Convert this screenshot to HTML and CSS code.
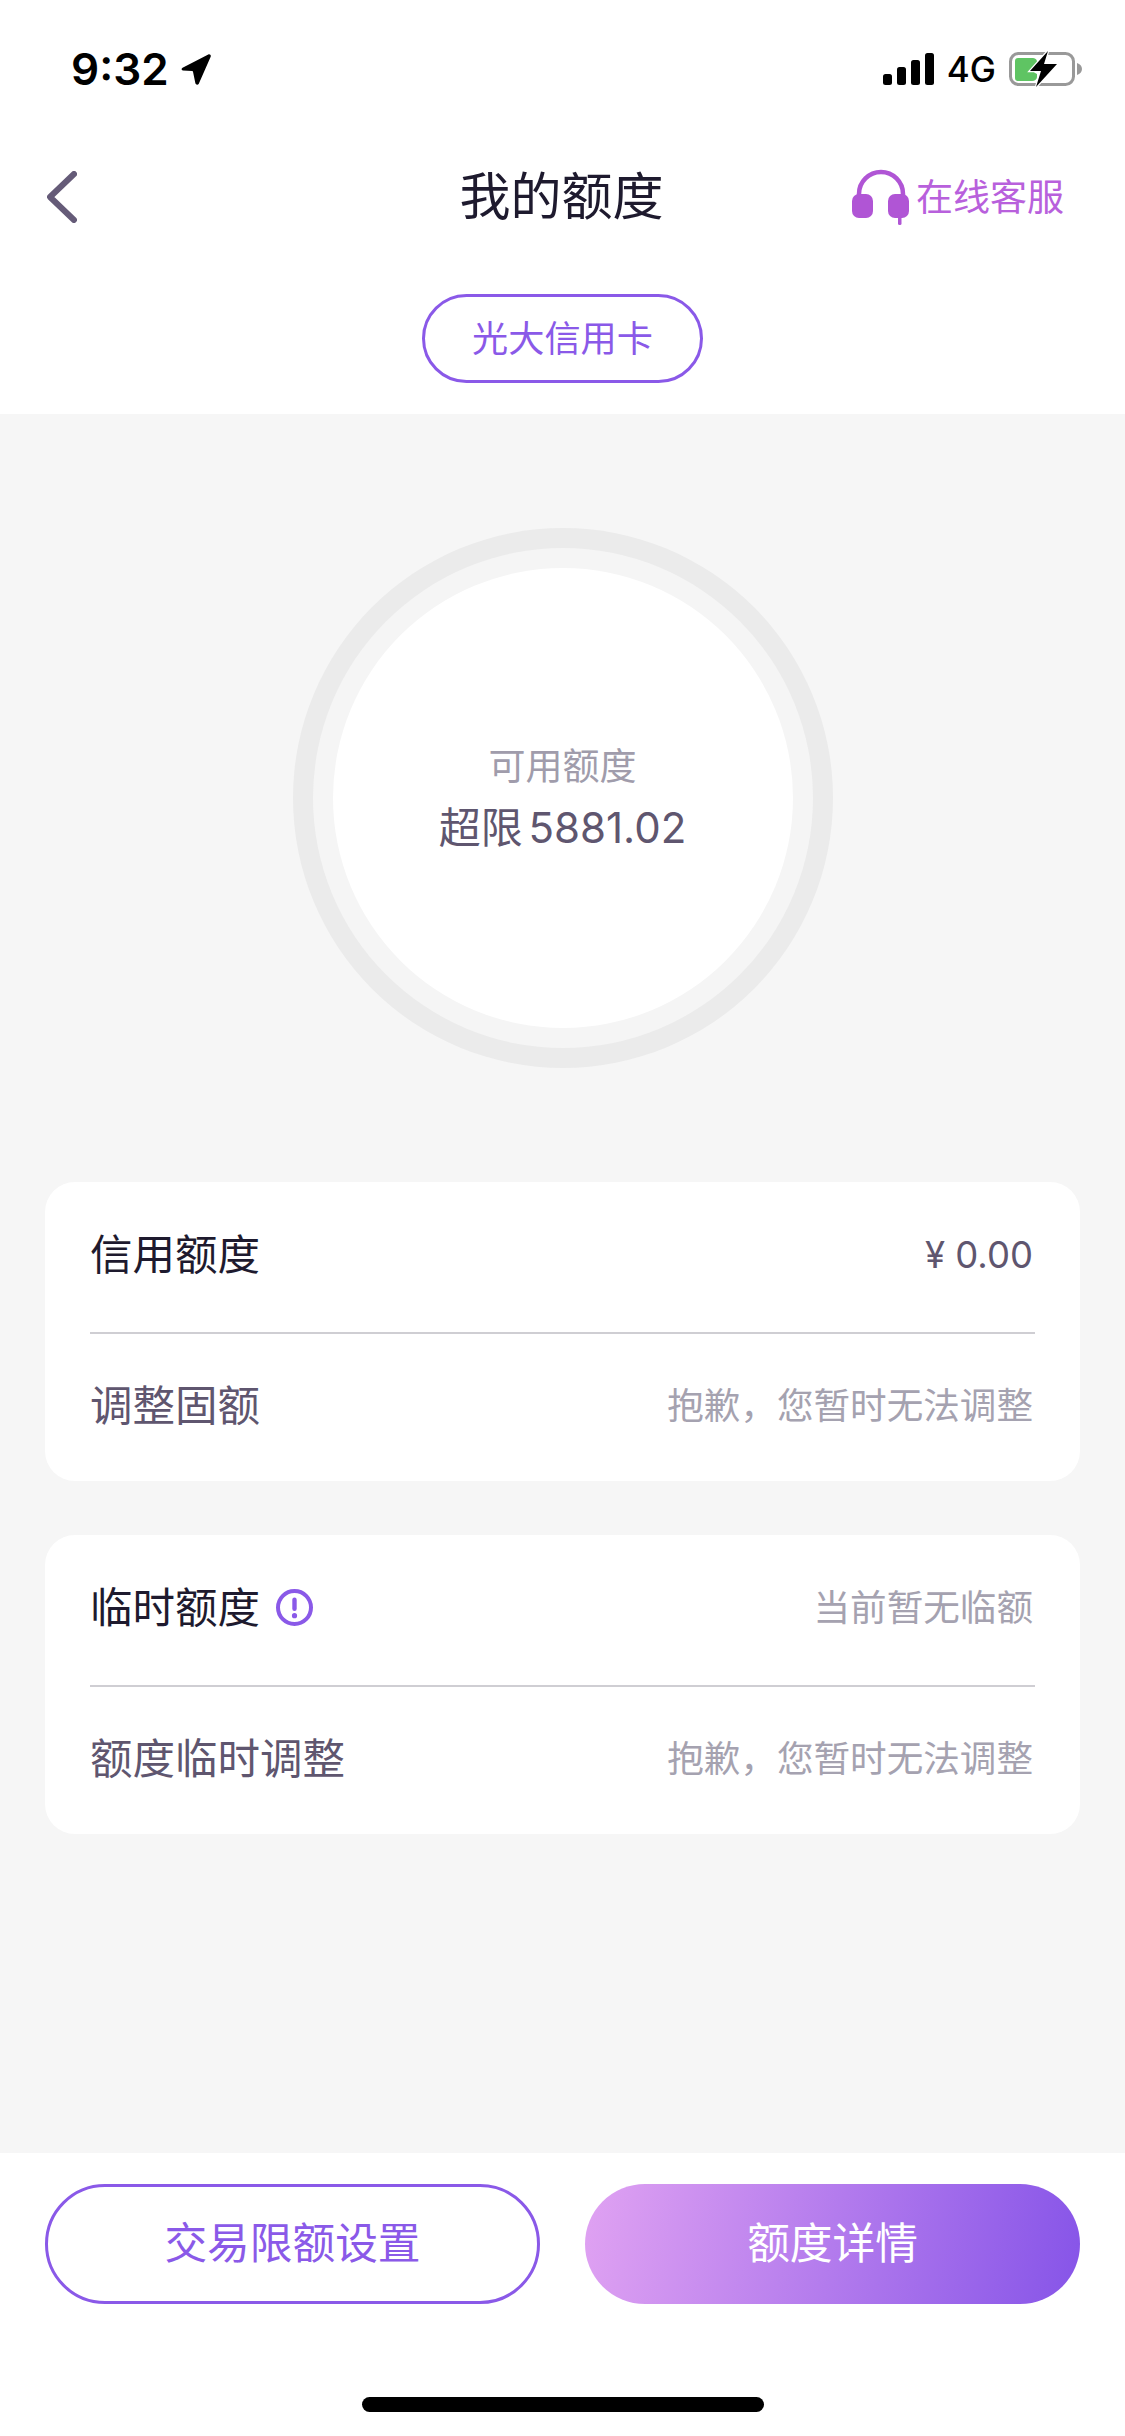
FILE: index.html
```html
<!DOCTYPE html>
<html lang="zh-CN">
<head>
  <meta charset="UTF-8" />
  <meta name="viewport" content="width=device-width, initial-scale=1">
  <title>我的额度</title>
  <link rel="stylesheet" href="styles.css">
</head>
<body>
  <div class="page">
    <div class="status-bar">
      <div class="status-left">
        <span class="time">9:32</span>
        <svg class="location" viewBox="0 0 29 30"><path d="M1.5 13.2 26.4.4c1.5-.7 2.9.7 2.3 2.2L17.2 28.7c-.7 1.6-2.9 1.4-3.3-.3l-2.3-11.2a1 1 0 0 0-.8-.8L1.9 15.9C.4 15.6 0 14 1.5 13.2Z"/></svg>
      </div>
      <div class="status-right">
        <svg class="signal" viewBox="0 0 51 32">
          <rect x="0" y="21" width="9" height="11" rx="2.5"/>
          <rect x="14" y="14" width="9" height="18" rx="2.5"/>
          <rect x="28" y="7" width="9" height="25" rx="2.5"/>
          <rect x="42" y="0" width="9" height="32" rx="2.5"/>
        </svg>
        <span class="network">4G</span>
        <svg class="battery" viewBox="0 0 73 36">
          <rect x="1.5" y="2.5" width="63" height="31" rx="8" fill="none" stroke="#999" stroke-width="3"/>
          <path d="M68 12c3 1 5 3 5 6s-2 5-5 6Z" fill="#999"/>
          <path d="M9 7h14c3 0 5 1 5 4v2c-3 1-4 3-4 5s1 4 4 5v3c0 2-2 4-5 4H9c-2 0-3-1-3-3V10c0-2 1-3 3-3Z" fill="#5fc463"/>
          <path d="M39 0 21 20h11l-5 16 21-23H35Z" fill="#000" stroke="#fff" stroke-width="2.5" paint-order="stroke"/>
        </svg>
      </div>
    </div>

    <div class="nav">
      <svg class="back" viewBox="0 0 30 52"><path d="M27 3 3 26l24 23" fill="none" stroke="#655b78" stroke-width="6" stroke-linecap="round" stroke-linejoin="round"/></svg>
      <h1 class="nav-title">我的额度</h1>
      <div class="service">
        <svg class="headset" viewBox="0 0 58 56">
          <path d="M7 27V25a22 22 0 0 1 44 0v2" fill="none" stroke="#b055d5" stroke-width="4.5"/>
          <rect x="0" y="25" width="21" height="24" rx="7" fill="#b055d5"/>
          <rect x="36" y="25" width="21" height="24" rx="7" fill="#b055d5"/>
          <rect x="46" y="46" width="3.5" height="10" rx="1.5" fill="#b055d5"/>
        </svg>
        <span>在线客服</span>
      </div>
    </div>

    <div class="tab-wrap">
      <span class="card-pill">光大信用卡</span>
    </div>

    <div class="main">
      <div class="ring-outer">
        <div class="ring-inner">
          <div class="ring-face">
            <div class="ring-label">可用额度</div>
            <div class="ring-value">超限 5881.02</div>
          </div>
        </div>
      </div>

      <div class="panel">
        <div class="row row-top">
          <span class="row-name">信用额度</span>
          <span class="row-amount">¥ 0.00</span>
        </div>
        <div class="row row-bottom">
          <span class="row-sub">调整固额</span>
          <span class="row-note">抱歉，您暂时无法调整</span>
        </div>
      </div>

      <div class="panel">
        <div class="row row-top">
          <span class="row-name with-icon">临时额度
            <svg class="info" viewBox="0 0 37 37">
              <circle cx="18.5" cy="18.5" r="16.5" fill="none" stroke="#8a59e8" stroke-width="4"/>
              <rect x="16.3" y="8.5" width="4.4" height="13.5" rx="2.2" fill="#8a59e8"/>
              <circle cx="18.5" cy="26.7" r="2.6" fill="#8a59e8"/>
            </svg>
          </span>
          <span class="row-note">当前暂无临额</span>
        </div>
        <div class="row row-bottom">
          <span class="row-sub">额度临时调整</span>
          <span class="row-note">抱歉，您暂时无法调整</span>
        </div>
      </div>
    </div>

    <div class="footer">
      <div class="actions">
        <button type="button" class="btn btn-outline"><span class="btn-text">交易限额设置</span></button>
        <button type="button" class="btn btn-fill"><span class="btn-text">额度详情</span></button>
      </div>
      <div class="home-bar"></div>
    </div>
  </div>
</body>
</html>
```

FILE: styles.css
```css
* { box-sizing: border-box; }
html, body { margin: 0; padding: 0; }
body {
  font-family: "Inter", "Noto Sans CJK SC", sans-serif;
  background: #fff;
  color: #1e1a2e;
}
.page {
  width: 1125px;
  height: 2436px;
  display: flex;
  flex-direction: column;
  overflow: hidden;
}

/* status bar */
.status-bar {
  height: 138px;
  flex: none;
  display: flex;
  justify-content: space-between;
  align-items: center;
  padding: 0 43px 0 71px;
  color: #000;
}
.status-left, .status-right { display: flex; align-items: center; }
.time { font-size: 44px; line-height: 50px; font-weight: 600; }
.location { width: 30px; height: 31px; margin-left: 12px; }
.signal { width: 51px; height: 32px; }
.network { font-size: 35px; line-height: 40px; font-weight: 500; margin-left: 13px; }
.battery { width: 73px; height: 36px; margin-left: 13px; }

/* nav */
.nav {
  height: 118px;
  flex: none;
  display: grid;
  grid-template-columns: 1fr auto 1fr;
  align-items: center;
  padding: 0 61px 0 47px;
}
.back { width: 30px; height: 52px; }
.nav-title {
  margin: 0;
  font-size: 51px;
  line-height: 70px;
  font-weight: 400;
  color: #1e1a2e;
  transform: translateX(6px);
}
.service {
  display: flex;
  align-items: center;
  justify-content: flex-end;
  gap: 6px;
  font-size: 37px;
  line-height: 50px;
  color: #b860dc;
}
.headset { width: 58px; height: 56px; }
.service span { padding: 2px 0 0; }

.tab-wrap {
  height: 158px;
  flex: none;
  display: flex;
  justify-content: center;
  padding-top: 38px;
}
.card-pill {
  width: 281px;
  height: 89px;
  border: 3px solid #8a59e8;
  border-radius: 45px;
  display: flex;
  align-items: center;
  justify-content: center;
  padding-bottom: 5px;
  font-size: 36.2px;
  color: #8a59e8;
}

/* main */
.main {
  flex: 1;
  background: #f6f6f6;
  padding: 114px 45px 0;
  display: flex;
  flex-direction: column;
  align-items: center;
}
.ring-outer {
  width: 540px;
  height: 540px;
  flex: none;
  border-radius: 50%;
  background: #ebebeb;
  padding: 20px;
  margin-bottom: 114px;
}
.ring-inner {
  width: 100%;
  height: 100%;
  border-radius: 50%;
  background: #f5f5f5;
  padding: 20px;
}
.ring-face {
  width: 100%;
  height: 100%;
  border-radius: 50%;
  background: #fff;
  display: flex;
  flex-direction: column;
  align-items: center;
  justify-content: center;
  gap: 11px;
  padding-bottom: 2px;
}
.ring-label { font-size: 37px; line-height: 50px; color: #a09cab; }
.ring-value { font-size: 42px; line-height: 50px; color: #5f566f; word-spacing: -6px; }

.panel {
  width: 100%;
  height: 299px;
  flex: none;
  background: #fff;
  border-radius: 30px;
  padding: 0 45px;
  margin-bottom: 54px;
}
.row {
  display: flex;
  justify-content: space-between;
  align-items: center;
}
.row-top {
  height: 152px;
  padding-bottom: 5px;
  border-bottom: 2px solid #cfced3;
}
.row-bottom { height: 147px; padding-bottom: 4px; }
.row-name { font-size: 42.5px; line-height: 60px; color: #1e1a2e; }
.row-sub { font-size: 42.5px; line-height: 60px; color: #5f566f; }
.row-amount { font-size: 36.5px; line-height: 50px; color: #5f566f; padding-right: 2px; }
.row-note { font-size: 36.6px; line-height: 50px; color: #a5a2b0; padding-right: 2px; }
.with-icon { display: flex; align-items: center; gap: 16px; }
.info { width: 37px; height: 37px; }

/* footer */
.footer {
  height: 283px;
  flex: none;
  background: #fff;
  padding-top: 31px;
  display: flex;
  flex-direction: column;
  align-items: center;
}
.actions {
  width: 100%;
  display: flex;
  justify-content: space-between;
  padding: 0 45px;
}
.btn {
  width: 495px;
  height: 120px;
  border-radius: 60px;
  font-family: inherit;
  font-size: 42.7px;
  padding: 0 0 8px;
}
.btn-outline {
  border: 3px solid #8a59e8;
  background: #fff;
  color: #8a59e8;
}
.btn-fill {
  border: none;
  background: linear-gradient(100deg, #e0a2f2, #8654e8);
  color: #fff;
}
.home-bar {
  width: 402px;
  height: 15px;
  border-radius: 8px;
  background: #000;
  margin-top: 93px;
}
```
